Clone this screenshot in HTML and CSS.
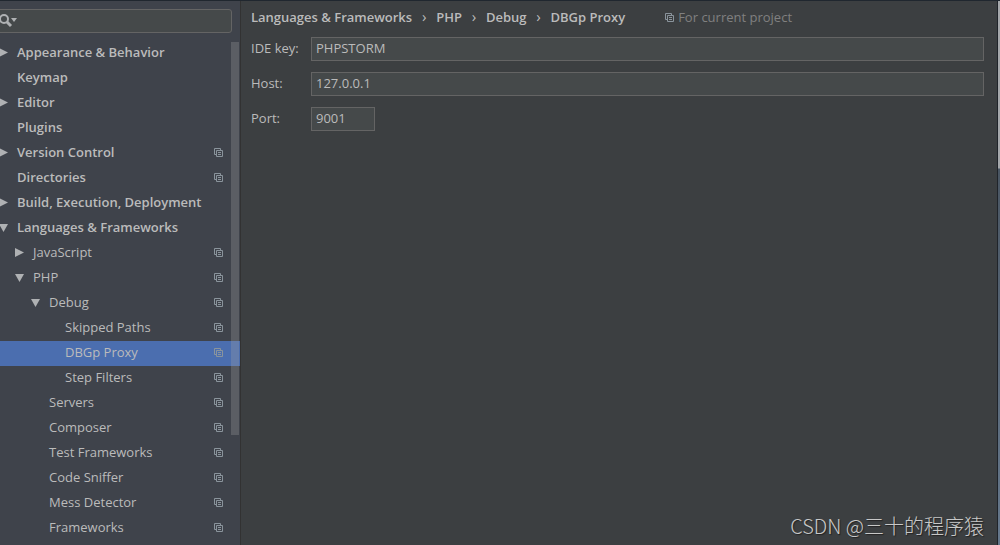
FILE: index.html
```
<!DOCTYPE html>
<html lang="en">
<head>
    <meta charset="UTF-8">
    <title>Settings</title>
    <link rel="stylesheet" href="styles.css">
</head>

<body>
    <svg class="defs" width="0" height="0">
        <symbol id="copy" viewBox="0 0 9 9">
            <path d="M2.5 6.5h-2v-6h6v2" />
            <path d="M2.5 2.5h6v6h-6z" />
            <path d="M4 4.5h3M4 6.5h3" />
        </symbol>
    </svg>
    <div class="settings">
        <aside class="sidebar">
            <div class="search">
                <svg class="search-icon" width="18" height="14" viewBox="0 0 18 14">
                    <circle cx="5" cy="5" r="4" />
                    <path class="handle" d="M8 8l4 4" />
                    <path class="arrow" d="M12 4h6l-3 4z" />
                </svg>
                <input type="text" aria-label="Search settings">
            </div>
            <ul class="tree">
                <li class="group closed"><a href="#">Appearance &amp; Behavior</a></li>
                <li class="group"><a href="#">Keymap</a></li>
                <li class="group closed"><a href="#">Editor</a></li>
                <li class="group"><a href="#">Plugins</a></li>
                <li class="group closed"><a href="#">Version Control</a><svg class="copy"><use href="#copy" /></svg></li>
                <li class="group"><a href="#">Directories</a><svg class="copy"><use href="#copy" /></svg></li>
                <li class="group closed"><a href="#">Build, Execution, Deployment</a></li>
                <li class="group open"><a href="#">Languages &amp; Frameworks</a></li>
                <li class="level1 closed"><a href="#">JavaScript</a><svg class="copy"><use href="#copy" /></svg></li>
                <li class="level1 open"><a href="#">PHP</a><svg class="copy"><use href="#copy" /></svg></li>
                <li class="level2 open"><a href="#">Debug</a><svg class="copy"><use href="#copy" /></svg></li>
                <li class="level3"><a href="#">Skipped Paths</a><svg class="copy"><use href="#copy" /></svg></li>
                <li class="level3 selected"><a href="#">DBGp Proxy</a><svg class="copy"><use href="#copy" /></svg></li>
                <li class="level3"><a href="#">Step Filters</a><svg class="copy"><use href="#copy" /></svg></li>
                <li class="level2"><a href="#">Servers</a><svg class="copy"><use href="#copy" /></svg></li>
                <li class="level2"><a href="#">Composer</a><svg class="copy"><use href="#copy" /></svg></li>
                <li class="level2"><a href="#">Test Frameworks</a><svg class="copy"><use href="#copy" /></svg></li>
                <li class="level2"><a href="#">Code Sniffer</a><svg class="copy"><use href="#copy" /></svg></li>
                <li class="level2"><a href="#">Mess Detector</a><svg class="copy"><use href="#copy" /></svg></li>
                <li class="level2"><a href="#">Frameworks</a><svg class="copy"><use href="#copy" /></svg></li>
            </ul>
            <div class="scrollbar"></div>
        </aside>
        <main class="content">
            <div class="heading">
                <ol class="breadcrumb">
                    <li>Languages &amp; Frameworks</li>
                    <li>PHP</li>
                    <li>Debug</li>
                    <li>DBGp Proxy</li>
                </ol>
                <span class="scope"><svg class="copy"><use href="#copy" /></svg>For current project</span>
            </div>
            <form class="form">
                <label for="key">IDE key:</label>
                <input id="key" type="text" value="PHPSTORM">
                <label for="host">Host:</label>
                <input id="host" type="text" value="127.0.0.1">
                <label for="port">Port:</label>
                <input id="port" class="short" type="text" value="9001">
            </form>
            <p class="watermark">CSDN @三十的程序猿</p>
        </main>
        <div class="edge"></div>
    </div>
</body>

</html>
```
FILE: styles.css
```
* {
    box-sizing: border-box;
}

body,
ul,
ol,
p {
    margin: 0;
    padding: 0;
}

ul,
ol {
    list-style: none;
}

body,
input {
    font: 13px "Open Sans", "Noto Sans", sans-serif;
    color: #bbb;
}

.defs {
    position: absolute;
}

.settings {
    display: flex;
    height: 100vh;
    overflow: hidden;
    border-top: 1px solid #20272f;
    background: #3c3f41;
}

/* sidebar */
.sidebar {
    position: relative;
    flex: 0 0 241px;
    overflow: hidden;
    border-right: 1px solid #323232;
    background: #3f434b;
}

.search {
    display: flex;
    align-items: center;
    height: 24px;
    margin: 8px 8px 8px -4px;
    padding-left: 2px;
    border: 1px solid #646464;
    border-radius: 3px;
    background: #45494a;
}

.search input {
    flex: 1;
    min-width: 0;
    border: 0;
    outline: 0;
    background: none;
}

.search-icon {
    flex: none;
    fill: none;
    stroke: #afb1b3;
    stroke-width: 2;
}

.search-icon .handle {
    stroke-width: 3;
}

.search-icon .arrow {
    fill: #afb1b3;
    stroke: none;
}

.tree li {
    display: flex;
    align-items: center;
    height: 25px;
    padding-right: 17px;
    padding-bottom: 2px;
}

.tree li::before {
    content: "";
    flex: none;
    width: 9px;
    height: 9px;
    margin-right: 9px;
}

.tree a {
    flex: 1;
    padding-bottom: 2px;
    color: inherit;
    text-decoration: none;
    white-space: nowrap;
}

.tree .group {
    margin-left: -1px;
    font-weight: 600;
}

.tree .level1 {
    padding-left: 15px;
}

.tree .level2 {
    padding-left: 31px;
}

.tree .level3 {
    padding-left: 47px;
}

.tree .closed::before {
    background: #afb1b3;
    clip-path: polygon(0 0, 100% 50%, 0 100%);
}

.tree .open::before {
    background: #afb1b3;
    clip-path: polygon(0 10%, 100% 10%, 50% 100%);
}

.tree .selected {
    background: #4b6eaf;
}

.copy {
    flex: none;
    width: 9px;
    height: 9px;
    fill: none;
    stroke: #8a949c;
}

.scrollbar {
    position: absolute;
    top: 41px;
    right: 1px;
    width: 8px;
    height: 393px;
    background: rgba(166, 166, 166, 0.28);
}

/* right side */
.content {
    position: relative;
    flex: 1;
    min-width: 0;
    padding: 7px 13px 0 10px;
    border-right: 1px solid #20242a;
}

.heading {
    display: flex;
    align-items: center;
    height: 18px;
    margin-bottom: 11px;
    white-space: nowrap;
}

.breadcrumb {
    display: flex;
    font-weight: 600;
}

.breadcrumb li + li::before {
    content: "›";
    display: inline-block;
    width: 24px;
    font-size: 15px;
    font-weight: normal;
    line-height: 1;
    text-align: center;
}

.scope {
    display: flex;
    align-items: center;
    gap: 4px;
    margin-left: 40px;
    color: #808080;
}

.form {
    display: grid;
    grid-template-columns: 60px 1fr;
    row-gap: 11px;
    align-items: center;
}

.form label {
    padding-bottom: 2px;
}

.form input {
    width: 100%;
    height: 24px;
    padding: 0 4px 2px;
    border: 1px solid #646464;
    outline: 0;
    background: #45494a;
}

.form .short {
    width: 64px;
}

.watermark {
    position: absolute;
    right: 13px;
    bottom: 5px;
    font: 300 20px/28px "Noto Sans CJK SC", sans-serif;
    color: #c8c8c8;
    text-shadow: 1px 1px 1px #222;
}

.edge {
    flex: 0 0 2px;
    background: linear-gradient(#a5a8ab 167px, #4a5663 168px, #66788c);
}
```
